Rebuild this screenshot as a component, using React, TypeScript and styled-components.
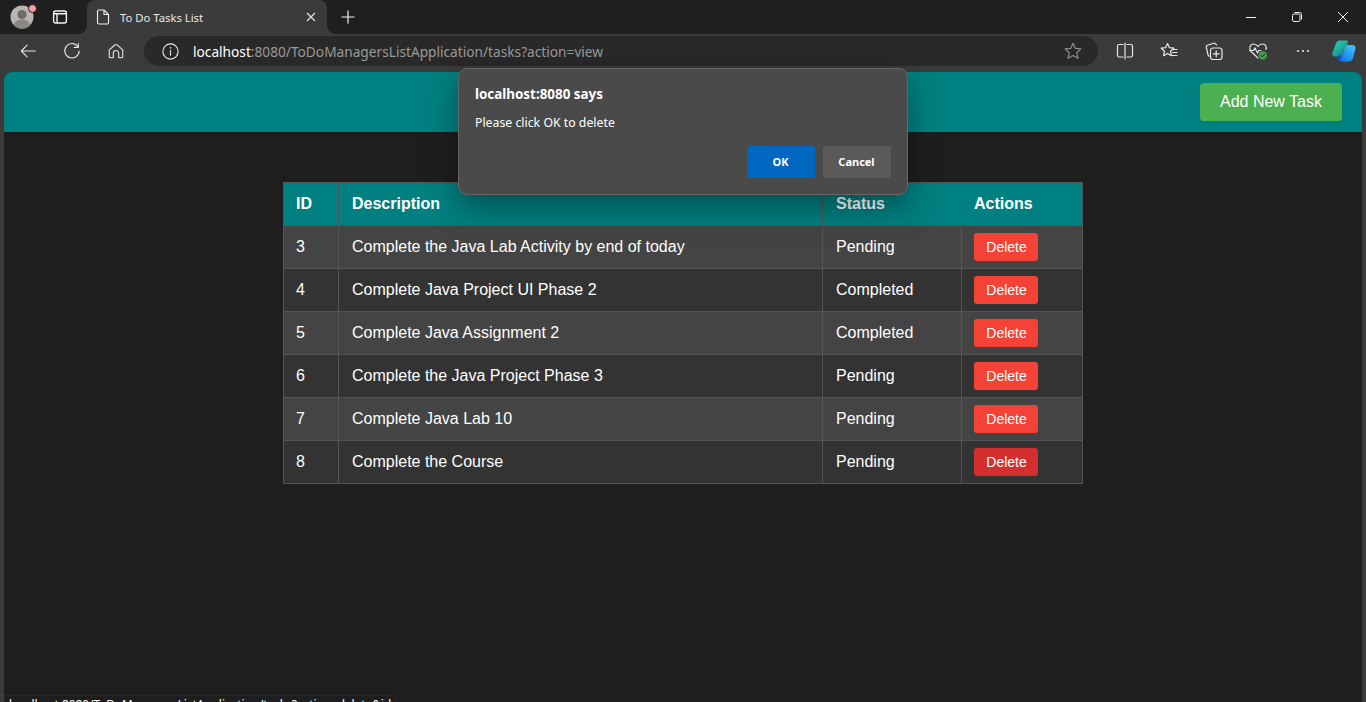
import styled, { createGlobalStyle } from 'styled-components';
import { ReactNode } from 'react';

const UI_FONT = `'Noto Sans', 'Open Sans', sans-serif`;

const tasks = [
	{ id: 3, description: 'Complete the Java Lab Activity by end of today', status: 'Pending' },
	{ id: 4, description: 'Complete Java Project UI Phase 2', status: 'Completed' },
	{ id: 5, description: 'Complete Java Assignment 2', status: 'Completed' },
	{ id: 6, description: 'Complete the Java Project Phase 3', status: 'Pending' },
	{ id: 7, description: 'Complete Java Lab 10', status: 'Pending' },
	{ id: 8, description: 'Complete the Course', status: 'Pending' },
];

const GlobalStyle = createGlobalStyle`
	html, body {
		margin: 0;
		padding: 0;
		height: 100%;
		overflow: hidden;
		background: #1e1e1e;
	}
`;

const Browser = styled.div`
	position: relative;
	display: flex;
	flex-direction: column;
	width: 1366px;
	height: 702px;
	overflow: hidden;
	background: #3b3b3b;
`;

const TabStrip = styled.div`
	display: flex;
	align-items: stretch;
	height: 34px;
	background: #1f1f1f;
`;

const Avatar = styled.div`
	position: relative;
	display: flex;
	align-items: center;
	justify-content: center;
	width: 24px;
	height: 24px;
	margin: 5px 0 0 10px;
	border-radius: 50%;
`;

const AvatarDot = styled.span`
	position: absolute;
	top: -1px;
	right: -3px;
	width: 7px;
	height: 7px;
	border-radius: 50%;
	background: #f4a0a0;
	border: 1px solid #1f1f1f;
`;

const TabsToggle = styled.div`
	display: flex;
	align-items: center;
	justify-content: center;
	width: 16px;
	margin-left: 18px;
	margin-right: 19px;
`;

const Tab = styled.div`
	position: relative;
	display: flex;
	align-items: center;
	width: 240px;
	padding: 0 10px 0 9px;
	box-sizing: border-box;
	background: #3b3b3b;
	border-radius: 8px 8px 0 0;
	color: #e8e8e8;
	font: 11.3px ${UI_FONT};

	&::before,
	&::after {
		content: '';
		position: absolute;
		bottom: 0;
		width: 8px;
		height: 8px;
	}

	&::before {
		left: -8px;
		background: radial-gradient(circle at 0 0, transparent 7.5px, #3b3b3b 8px);
	}

	&::after {
		right: -8px;
		background: radial-gradient(circle at 100% 0, transparent 7.5px, #3b3b3b 8px);
	}
`;

const TabTitle = styled.span`
	flex: 1;
	margin-left: 10px;
	white-space: nowrap;
`;

const NewTab = styled.div`
	display: flex;
	align-items: center;
	justify-content: center;
	width: 16px;
	margin-left: 13px;
`;

const WindowControls = styled.div`
	display: flex;
	align-items: center;
	margin-left: auto;
`;

const WindowButton = styled.div`
	display: flex;
	align-items: center;
	justify-content: center;
	width: 46px;
	height: 34px;
`;

const Toolbar = styled.div`
	display: flex;
	align-items: center;
	height: 38px;
	padding: 0 0 4px 6px;
	box-sizing: border-box;
`;

const ToolButton = styled.div`
	display: flex;
	align-items: center;
	justify-content: center;
	flex: none;
	width: 44px;
	height: 30px;
`;

const ToolGroup = styled.div`
	display: flex;
	align-items: center;
	gap: 0.4px;
`;

const CopilotButton = styled(ToolButton)`
	width: 38px;
`;

const AddressBar = styled.div`
	display: flex;
	align-items: center;
	width: 954px;
	height: 30px;
	margin: 0 5px 0 6px;
	padding: 0 15px 0 17px;
	box-sizing: border-box;
	border-radius: 15px;
	background: #292929;
	font: 13.7px ${UI_FONT};
	color: #9a9a9a;
`;

const Url = styled.div`
	flex: 1;
	margin-left: 13px;
	white-space: nowrap;
`;

const Host = styled.span`
	color: #fff;
`;

const PageFrame = styled.div`
	flex: 1;
	min-height: 0;
	padding: 0 4px;
`;

const Page = styled.main`
	height: 100%;
	background: #1e1e1e;
	border-radius: 8px 8px 0 0;
	overflow: hidden;
	font-family: 'Liberation Sans', Arial, sans-serif;
`;

const Header = styled.header`
	display: flex;
	align-items: center;
	justify-content: flex-end;
	height: 60px;
	padding: 0 20px;
	background: #008080;
`;

const AddButton = styled.button`
	width: 142px;
	height: 38px;
	padding: 0;
	border: 0;
	border-radius: 4px;
	background: #4caf50;
	color: #fff;
	font: 16px 'Liberation Sans', Arial, sans-serif;
`;

const TaskTable = styled.table`
	width: 799px;
	margin: 50px 0 0 279px;
	border-collapse: collapse;
	table-layout: fixed;
	color: #fff;
	font-size: 16px;
`;

const HeadCell = styled.th`
	height: 43px;
	padding: 0 12px 0 13px;
	box-sizing: border-box;
	border: 1px solid #555;
	background: #008080;
	text-align: left;
	font-weight: bold;

	&:first-child,
	&:last-child {
		padding-left: 12px;
	}
`;

const Row = styled.tr<{ $alt: boolean }>`
	background: ${({ $alt }) => ($alt ? '#333333' : '#444444')};
`;

const Cell = styled.td`
	height: 43px;
	padding: 0 12px 0 13px;
	box-sizing: border-box;
	border: 1px solid #555;

	&:first-child,
	&:last-child {
		padding-left: 12px;
	}
`;

const DeleteButton = styled.button<{ $hover?: boolean }>`
	display: block;
	width: 64px;
	height: 28px;
	padding: 0 0 0 1px;
	border: 0;
	border-radius: 3px;
	background: ${({ $hover }) => ($hover ? '#d32f2f' : '#f44336')};
	color: #fff;
	font: 14px 'Liberation Sans', Arial, sans-serif;
`;

const Dialog = styled.div`
	position: absolute;
	top: 68px;
	left: 458px;
	width: 450px;
	height: 127px;
	padding: 16px 16px 16px 16px;
	box-sizing: border-box;
	border: 1px solid #666;
	border-radius: 9px;
	background: #4a4a4a;
	box-shadow: 0 12px 32px rgba(0, 0, 0, 0.38);
	color: #fff;
	font: 12.3px/18px ${UI_FONT};
`;

const DialogTitle = styled.div`
	font-size: 13.4px;
	font-weight: 700;
`;

const DialogText = styled.div`
	margin-top: 11px;
`;

const DialogActions = styled.div`
	display: flex;
	justify-content: flex-end;
	gap: 8px;
	margin-top: 14px;
`;

const DialogButton = styled.button<{ $primary?: boolean }>`
	width: 68px;
	height: 32px;
	padding: 0 1px 2px 0;
	border: 0;
	border-radius: 3px;
	background: ${({ $primary }) => ($primary ? '#0067c0' : '#5a5a5a')};
	color: #fff;
	font: 700 11px ${UI_FONT};
`;

const StatusBubble = styled.div`
	position: absolute;
	left: 4px;
	bottom: -8px;
	width: 393px;
	height: 15px;
	padding: 0 4px;
	box-sizing: border-box;
	border: 1px solid #2a2a2a;
	border-radius: 0 4px 0 0;
	background: #1e1e1e;
	color: #fff;
	font: 11.8px/17px ${UI_FONT};
	white-space: nowrap;
	overflow: hidden;
`;

const Svg = ({ size = 20, children }: { size?: number; children: ReactNode }) => (
	<svg width={size} height={size} viewBox='0 0 20 20' fill='none' stroke='#e6e6e6' strokeWidth='1.2' strokeLinecap='round' strokeLinejoin='round'>
		{children}
	</svg>
);

const CopilotIcon = () => (
	<svg width='24' height='22' viewBox='0 0 24 22'>
		<defs>
			<linearGradient id='copA' x1='0.1' y1='0.2' x2='0.8' y2='1'>
				<stop offset='0' stopColor='#27c6c0' />
				<stop offset='0.55' stopColor='#1fa48f' />
				<stop offset='1' stopColor='#1a5fd6' />
			</linearGradient>
			<linearGradient id='copB' x1='0.8' y1='0' x2='0.2' y2='1'>
				<stop offset='0' stopColor='#3cc4f5' />
				<stop offset='1' stopColor='#1878e8' />
			</linearGradient>
		</defs>
		<path d='M8 .5h6.500c1.300 0 1.800 1 1.300 2.200L11.500 14.500c-.5 1.300-1.400 2-2.700 2H3.200C1 16.500-.2 15 .4 13L3.800 3.800C4.400 1.800 6 .5 8 .5z' fill='url(#copA)' />
		<path d='M6.500 15.500h4l3-1.500-2 5.500c-.4 1-1.200 1.500-2.200 1.500H7.500c-1.200 0-1.800-.8-1.500-2z' fill='#1b4fc4' />
		<path d='M15.500 5h4.300c2.600 0 4.200 1.500 3.700 3.800l-2.300 8.700c-.6 2.400-2.200 4-4.700 4H10c-1.200 0-1.700-1-1.200-2.100l5.100-13.200C14.200 5.600 14.700 5 15.500 5z' fill='url(#copB)' />
	</svg>
);

export default function App() {
	return (
		<Browser>
			<GlobalStyle />
			<TabStrip>
				<Avatar>
					<svg width='24' height='24' viewBox='0 0 24 24'>
						<circle cx='12' cy='12' r='11.5' fill='#b9b5b0' />
						<circle cx='12' cy='9.500' r='4.600' fill='#6f6b68' />
						<path d='M3.600 20c1.600-4 4.800-5.600 8.400-5.600s6.800 1.600 8.400 5.600a11.500 11.500 0 0 1-16.800 0z' fill='#8b8783' />
					</svg>
					<AvatarDot />
				</Avatar>
				<TabsToggle>
					<svg width='16' height='16' viewBox='0 0 16 16' fill='none' stroke='#f4f4f4' strokeWidth='1.4'>
						<rect x='1.600' y='2' width='12.800' height='12' rx='2' />
						<path d='M1.600 4.800h12.800M5 4.800V14' />
					</svg>
				</TabsToggle>
				<Tab>
					<svg width='14' height='16' viewBox='0 0 14 16' fill='none' stroke='#f0f0f0' strokeWidth='1.1' strokeLinejoin='round'>
						<path d='M3 1h5l4.500 4.500V13.500a1.500 1.500 0 0 1-1.500 1.500H3a1.500 1.500 0 0 1-1.500-1.500V2.500A1.500 1.500 0 0 1 3 1z' />
						<path d='M8 1v4.500h4.500' />
					</svg>
					<TabTitle>To Do Tasks List</TabTitle>
					<svg width='12' height='12' viewBox='0 0 12 12' fill='none' stroke='#e6e6e6' strokeWidth='1.1'>
						<path d='M2 2l8 8M10 2l-8 8' />
					</svg>
				</Tab>
				<NewTab>
					<svg width='16' height='16' viewBox='0 0 16 16' fill='none' stroke='#f0f0f0' strokeWidth='1.2'>
						<path d='M8 1.500v13M1.500 8h13' />
					</svg>
				</NewTab>
				<WindowControls>
					<WindowButton>
						<svg width='12' height='12' viewBox='0 0 12 12' fill='none' stroke='#f0f0f0'>
							<path d='M1 6.500h10' />
						</svg>
					</WindowButton>
					<WindowButton>
						<svg width='12' height='12' viewBox='0 0 12 12' fill='none' stroke='#f0f0f0'>
							<rect x='1.500' y='3' width='7.500' height='7.500' rx='1.500' />
							<path d='M3.500 1.500h5a2 2 0 0 1 2 2v5' />
						</svg>
					</WindowButton>
					<WindowButton>
						<svg width='12' height='12' viewBox='0 0 12 12' fill='none' stroke='#f0f0f0'>
							<path d='M1 1l10 10M11 1L1 11' />
						</svg>
					</WindowButton>
				</WindowControls>
			</TabStrip>
			<Toolbar>
				<ToolButton>
					<Svg size={18}>
						<path d='M18 10H2.500M9 3.500L2.500 10 9 16.500' />
					</Svg>
				</ToolButton>
				<ToolButton>
					<Svg size={18}>
						<path d='M16.800 5.500A8 8 0 1 0 18 10' />
						<path d='M17 1.500v4.500h-4.500' />
					</Svg>
				</ToolButton>
				<ToolButton>
					<Svg size={18}>
						<path d='M2.500 8.800L8.800 3.300a1.800 1.800 0 0 1 2.400 0l6.300 5.500V16a1.500 1.500 0 0 1-1.500 1.500H13V12.500a3 3 0 0 0-6 0v5H4A1.500 1.500 0 0 1 2.500 16z' />
					</Svg>
				</ToolButton>
				<AddressBar>
					<Svg size={19}>
						<circle cx='10' cy='10' r='8' />
						<path d='M10 9v5' />
						<path d='M10 6v.3' strokeWidth='1.6' />
					</Svg>
					<Url>
						<Host>localhost</Host>:8080/ToDoManagersListApplication/tasks?action=view
					</Url>
					<Svg>
						<path stroke='#8c8c8c' d='M10 2.300l2.300 5 5.500.6-4 3.800 1.100 5.500-4.900-2.800-4.900 2.800 1.100-5.500-4-3.800 5.500-.6z' />
					</Svg>
				</AddressBar>
				<ToolGroup>
					<ToolButton>
						<Svg>
							<path d='M8 3.500H4a1.500 1.500 0 0 0-1.500 1.500v9.500A1.500 1.500 0 0 0 4 16h4M12 3.500h4A1.500 1.500 0 0 1 17.500 5v9.500A1.500 1.500 0 0 1 16 16h-4M10 2v16' />
						</Svg>
					</ToolButton>
					<ToolButton>
						<Svg>
							<path d='M8.500 2.500l1.900 4.200 4.400.5-3.300 3 .9 4.500-3.900-2.300-3.900 2.300.9-4.500-3.300-3 4.400-.5z' />
							<path d='M13.500 8.500h4.500M13.500 11.500h4.500M13 14.500h5' />
						</Svg>
					</ToolButton>
					<ToolButton>
						<Svg>
							<path d='M12.500 3.800l-1.300-1.200a1.500 1.500 0 0 0-1.500-.3L3.500 4.300A1.500 1.500 0 0 0 2.300 6l1.600 7.500c.2.800.6 1.300 1.200 1.700' />
							<rect x='6.500' y='7' width='11.500' height='11.500' rx='2.500' />
							<path d='M12.200 9.800v6M9.200 12.800h6' />
						</Svg>
					</ToolButton>
					<ToolButton>
						<svg width='20' height='20' viewBox='0 0 20 20' fill='none' stroke='#e6e6e6' strokeWidth='1.2' strokeLinejoin='round' strokeLinecap='round'>
							<path d='M10 17L3 10.500C.5 7.500 2 3 5.500 3c2 0 3.500 1 4.500 2.500C11 4 12.500 3 14.500 3c3 0 4.500 3 3.500 5.500' />
							<path d='M1.500 9.500h4l1.500-2.500 2.500 5 1.500-2.500h2' />
							<circle cx='14.800' cy='14.500' r='4.600' fill='#45a04a' stroke='#3b3b3b' strokeWidth='0.8' />
							<path d='M12.900 14.500l1.300 1.300 2.300-2.600' stroke='#1f1f1f' strokeWidth='1' />
						</svg>
					</ToolButton>
					<ToolButton>
						<svg width='14' height='4' viewBox='0 0 14 4' fill='#e6e6e6'>
							<circle cx='2' cy='2' r='1.100' />
							<circle cx='7' cy='2' r='1.100' />
							<circle cx='12' cy='2' r='1.100' />
						</svg>
					</ToolButton>
					<CopilotButton>
						<CopilotIcon />
					</CopilotButton>
				</ToolGroup>
			</Toolbar>
			<PageFrame>
				<Page>
					<Header>
						<AddButton>Add New Task</AddButton>
					</Header>
					<TaskTable>
						<colgroup>
							<col width='55' />
							<col width='484' />
							<col width='139' />
							<col width='121' />
						</colgroup>
						<thead>
							<tr>
								<HeadCell>ID</HeadCell>
								<HeadCell>Description</HeadCell>
								<HeadCell>Status</HeadCell>
								<HeadCell>Actions</HeadCell>
							</tr>
						</thead>
						<tbody>
							{tasks.map((task, index) => (
								<Row key={task.id} $alt={index % 2 === 1}>
									<Cell>{task.id}</Cell>
									<Cell>{task.description}</Cell>
									<Cell>{task.status}</Cell>
									<Cell>
										<DeleteButton $hover={task.id === 8}>Delete</DeleteButton>
									</Cell>
								</Row>
							))}
						</tbody>
					</TaskTable>
				</Page>
			</PageFrame>
			<StatusBubble>localhost:8080/ToDoManagersListApplication/tasks?action=delete&amp;id=8</StatusBubble>
			<Dialog>
				<DialogTitle>localhost:8080 says</DialogTitle>
				<DialogText>Please click OK to delete</DialogText>
				<DialogActions>
					<DialogButton $primary>OK</DialogButton>
					<DialogButton>Cancel</DialogButton>
				</DialogActions>
			</Dialog>
		</Browser>
	);
}
